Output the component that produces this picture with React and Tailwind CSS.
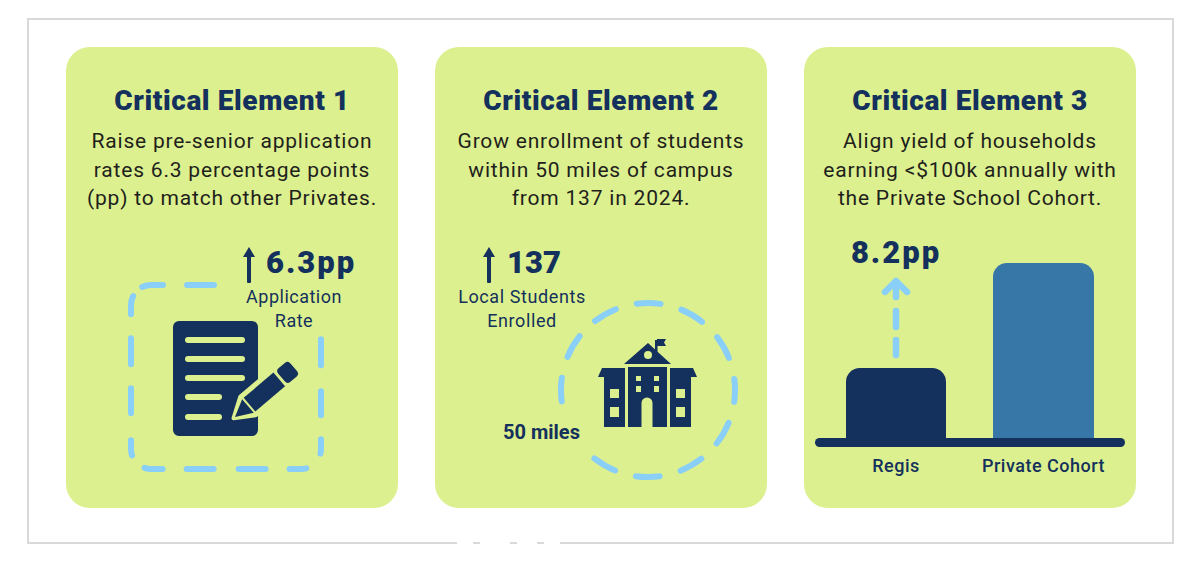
const NAVY = "#14305c";
const BG = "#dcf08f";
const SKY = "#8acff7";

function UpArrow() {
  return (
    <svg width="12" height="36" viewBox="0 0 12 36" className="shrink-0">
      <path d="M6 0 L12 10 H0 Z" fill={NAVY} />
      <rect x="4" y="8" width="4" height="28" rx="1" fill={NAVY} />
    </svg>
  );
}

function DocFigure() {
  return (
    <svg width="196" height="190" viewBox="0 0 196 190">
      <path
        d="M23 3 H173 A20 20 0 0 1 193 23 V167 A20 20 0 0 1 173 187 H23 A20 20 0 0 1 3 167 V23 A20 20 0 0 1 23 3 Z"
        fill="none"
        stroke={SKY}
        strokeWidth="6"
        strokeLinecap="round"
        strokeDasharray="21.9 24 27 152.4 26 26 24 24 14.6 21 16.8 24 27 25 27 24 18.2 18 15.3 27 25 24 26 24 18.6 12.88"
        strokeDashoffset="9.9"
      />
      <rect x="45" y="39" width="85" height="115" rx="6" fill={NAVY} />
      <g stroke={BG} strokeWidth="6" strokeLinecap="round">
        <line x1="60" y1="58" x2="114" y2="58" />
        <line x1="60" y1="77" x2="114" y2="77" />
        <line x1="60" y1="96" x2="114" y2="96" />
        <line x1="60" y1="115" x2="91" y2="115" />
        <line x1="60" y1="135" x2="91" y2="135" />
      </g>
      <g transform="translate(107 135) rotate(-40.3)">
        <path d="M-2 0 L17 -12 H79 V12 H17 Z" fill={BG} stroke={BG} strokeWidth="4" strokeLinejoin="round" />
        <path d="M0 0 L17 -9 V9 Z" fill={NAVY} />
        <rect x="19" y="-9" width="39" height="18" fill={NAVY} />
        <rect x="61" y="-9" width="16" height="18" rx="4" fill={NAVY} />
      </g>
    </svg>
  );
}

function SchoolFigure() {
  return (
    <svg width="184" height="184" viewBox="0 0 184 184">
      <circle cx="92" cy="92" r="87" fill="none" stroke={SKY} strokeWidth="6" strokeDasharray="24 21.55" strokeDashoffset="12" strokeLinecap="round" />
      <g transform="translate(42 41)" fill={NAVY}>
        <path d="M26 25 L50 4 L73 25 Z" />
        <circle cx="50" cy="16" r="4" fill={BG} />
        <rect x="57" y="1" width="2.5" height="12" />
        <path d="M59 0 H68 L66 3.5 L68 7 H59 Z" />
        <path d="M0 38 L4 29 H27 V38 Z" />
        <rect x="6" y="38" width="21" height="50" />
        <rect x="30" y="28" width="39" height="60" />
        <path d="M72 29 H95 L99 38 H72 Z" />
        <rect x="72" y="38" width="21" height="50" />
        <g fill={BG}>
          <rect x="12" y="50" width="9" height="9" />
          <rect x="12" y="68" width="9" height="10" />
          <rect x="78" y="50" width="9" height="9" />
          <rect x="78" y="68" width="9" height="10" />
          <rect x="38" y="37" width="5" height="5" />
          <rect x="56" y="37" width="5" height="5" />
          <rect x="38" y="47" width="5" height="6" />
          <rect x="56" y="47" width="5" height="6" />
          <path d="M43.5 88 V64 a5.5 5.5 0 0 1 11 0 V88 Z" />
        </g>
      </g>
    </svg>
  );
}

function DashedUp() {
  return (
    <svg width="30" height="82" viewBox="0 0 30 82" className="mt-[8px]">
      <g stroke={SKY} strokeWidth="6.5" strokeLinecap="round" fill="none">
        <polyline points="4,15 15,4 26,15" strokeLinejoin="round" />
        <line x1="15" y1="5" x2="15" y2="20" />
        <line x1="15" y1="34" x2="15" y2="50" />
        <line x1="15" y1="63" x2="15" y2="78" />
      </g>
    </svg>
  );
}

function Card({ title, lines, children }) {
  return (
    <div className="w-[332px] h-[461px] shrink-0 rounded-[24px] bg-[#dcf08f] flex flex-col items-center pt-[38px]">
      <h2 className="text-[28px] leading-[32px] font-black text-[#14305c] tracking-[0.6px] whitespace-nowrap">{title}</h2>
      <p className="mt-[10px] text-[21px] leading-[28.5px] text-center text-[#1f1f1c] tracking-[0.8px]">
        {lines.map((l, i) => (
          <span key={i} className="block whitespace-nowrap">{l}</span>
        ))}
      </p>
      {children}
    </div>
  );
}

export default function App() {
  return (
    <div className="w-[1200px] h-[564px] bg-white relative" style={{ fontFamily: "Roboto, 'Liberation Sans', sans-serif" }}>
      <div className="absolute left-[27px] top-[18px] w-[1147px] h-[526px] border-2 border-[#d9d9d9] flex gap-[37px] pl-[37px] pt-[27px]">
        <Card title="Critical Element 1" lines={["Raise pre-senior application", "rates 6.3 percentage points", "(pp) to match other Privates."]}>
          <div className="self-start ml-[62px] mt-[69px] relative">
            <DocFigure />
            <div className="absolute left-[115px] top-[-35px] flex flex-col items-start text-[#14305c]">
              <div className="flex items-start gap-[11px]">
                <UpArrow />
                <span className="text-[31px] leading-[32px] font-black tracking-[2px]">6.3pp</span>
              </div>
              <div className="mt-[2px] ml-[2px] w-[98px] text-center text-[18px] leading-[24px] tracking-[0.5px]">
                Application<br />Rate
              </div>
            </div>
          </div>
        </Card>

        <Card title="Critical Element 2" lines={["Grow enrollment of students", "within 50 miles of campus", "from 137 in 2024."]}>
          <div className="self-start ml-[121px] mt-[85px] relative">
            <SchoolFigure />
            <div className="absolute left-[-109px] top-[-51px] w-[150px] flex flex-col items-center text-[#14305c]">
              <div className="flex items-start gap-[12px]">
                <UpArrow />
                <span className="text-[31px] leading-[32px] font-black">137</span>
              </div>
              <div className="mt-[2px] text-center text-[18px] leading-[24px] tracking-[0.6px] whitespace-nowrap">
                Local Students<br />Enrolled
              </div>
            </div>
            <div className="absolute left-[-55px] top-[116px] bg-[#dcf08f] pl-[2px] pr-[12px] pt-[6px] pb-[2px] text-[20px] leading-[24px] font-bold text-[#14305c] whitespace-nowrap">
              50 miles
            </div>
          </div>
        </Card>

        <Card title="Critical Element 3" lines={["Align yield of households", "earning <$100k annually with", "the Private School Cohort."]}>
          <div className="self-start ml-[11px] mt-[24px] w-[310px] flex flex-col">
            <div className="flex items-end pl-[31px] gap-[47px]">
              <div className="w-[100px] flex flex-col items-center">
                <span className="text-[31px] leading-[32px] font-black text-[#14305c] tracking-[2px] whitespace-nowrap">8.2pp</span>
                <DashedUp />
                <div className="mt-[9px] w-[100px] h-[71px] rounded-t-[14px] bg-[#14305c]" />
              </div>
              <div className="w-[101px] h-[176px] rounded-t-[14px] bg-[#3677a8]" />
            </div>
            <div className="h-[9px] rounded-full bg-[#14305c] -mt-[1px]" />
            <div className="flex pl-[31px] gap-[47px] mt-[7px] text-[18px] leading-[24px] font-medium text-[#14305c] tracking-[0.5px]">
              <div className="w-[100px] flex justify-center whitespace-nowrap">Regis</div>
              <div className="w-[101px] flex justify-center whitespace-nowrap">Private Cohort</div>
            </div>
          </div>
        </Card>
      </div>
      <div className="absolute top-[540px] left-[457px] flex gap-[7px]">
        <div className="w-[16px] h-[4px] bg-white" />
        <div className="w-[30px] h-[4px] bg-white" />
        <div className="w-[20px] h-[4px] bg-white" />
        <div className="w-[16px] h-[4px] bg-white" />
      </div>
    </div>
  );
}
